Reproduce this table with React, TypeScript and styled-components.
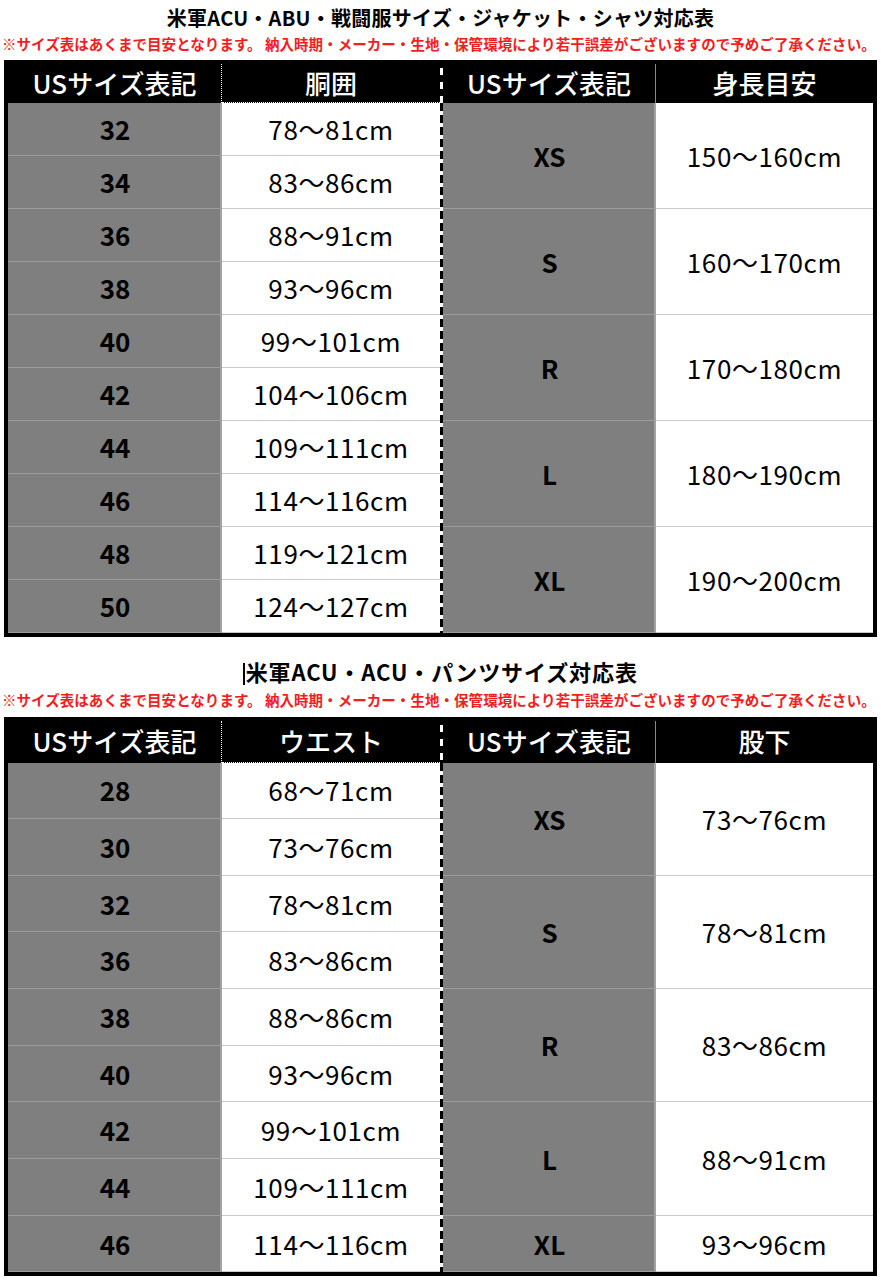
import styled, { createGlobalStyle } from 'styled-components';

const GlobalStyle = createGlobalStyle`
  html, body {
    margin: 0;
    padding: 0;
    background: #fff;
  }
  body {
    font-family: "Noto Sans CJK JP", "Noto Sans", sans-serif;
    color: #000;
  }
`;

const Page = styled.div`
  width: 881px;
  box-sizing: border-box;
  padding: 0 4px;
`;

const Title = styled.h2<{ $top: number; $size: number; $track: number }>`
  margin: ${(p) => p.$top}px 0 0;
  font-size: ${(p) => p.$size}px;
  letter-spacing: ${(p) => p.$track}px;
  line-height: 24px;
  font-weight: 700;
  text-align: center;
  white-space: nowrap;
`;

const Caret = styled.span`
  display: inline-block;
  width: 1.5px;
  height: 22px;
  margin-right: 1px;
  background: #000;
  vertical-align: -4px;
`;

const Note = styled.p<{ $top: number }>`
  margin: ${(p) => p.$top}px 0 8.5px -2px;
  font-size: 14.5px;
  line-height: 16px;
  font-weight: 700;
  color: #f41d1d;
  white-space: nowrap;
  letter-spacing: 0.05px;
`;

const Grid = styled.div<{ $head: number; $row: number; $rows: number }>`
  display: grid;
  grid-template-columns: 214px 218px 3px 213px 217px;
  grid-template-rows: ${(p) => p.$head}px repeat(${(p) => p.$rows}, ${(p) => p.$row}px);
  border: 4px solid #000;
  background: #000;
`;

const HeadCell = styled.div<{ $col: number; $edge?: 'dotted' | 'under' | 'line' }>`
  grid-column: ${(p) => p.$col};
  grid-row: 1;
  display: flex;
  align-items: center;
  justify-content: center;
  color: #fff;
  font-size: 26px;
  font-weight: 500;
  box-sizing: border-box;
  padding-bottom: 2px;
  border-right: ${(p) =>
    p.$edge === 'dotted' ? '1px dotted #fff' : p.$edge === 'line' ? '1px solid #8a8a8a' : 'none'};
  border-bottom: ${(p) => (p.$edge === 'under' ? '1px dotted #fff' : 'none')};
`;

const Divider = styled.div<{ $head?: boolean }>`
  grid-column: 3;
  grid-row: ${(p) => (p.$head ? '1' : '2 / -1')};
  background: ${(p) =>
    p.$head
      ? 'repeating-linear-gradient(to bottom, transparent 0 4px, #fff 4px 11px, transparent 11px 14px)'
      : 'repeating-linear-gradient(to bottom, #000 0 8px, #fff 8px 12px)'};
`;

const Cell = styled.div<{ $col: number; $row: number; $span?: number; $gray?: boolean; $bold?: boolean }>`
  grid-column: ${(p) => p.$col};
  grid-row: ${(p) => p.$row} / span ${(p) => p.$span ?? 1};
  display: flex;
  align-items: center;
  justify-content: center;
  box-sizing: border-box;
  background: ${(p) => (p.$gray ? '#7f7f7f' : '#fff')};
  border-bottom: 1px solid ${(p) => (p.$gray ? '#9c9c9c' : '#cacaca')};
  box-shadow: ${(p) => (p.$gray ? 'inset -2px 0 0 #a3a3a3' : 'none')};
  font-size: 26px;
  font-weight: ${(p) => (p.$bold ? 700 : 400)};
  letter-spacing: ${(p) => (p.$bold ? '0' : '0.6px')};
  padding-bottom: 1px;
`;

type Side = { size: string; value: string; span: number };

type TableData = {
  title: string;
  caret?: boolean;
  titleTop: number;
  titleSize: number;
  titleTrack: number;
  noteTop: number;
  head: number;
  row: number;
  headers: [string, string, string, string];
  left: [string, string][];
  right: Side[];
};

const NOTE =
  '※サイズ表はあくまで目安となります。 納入時期・メーカー・生地・保管環境により若干誤差がございますので予めご了承ください。';

const tables: TableData[] = [
  {
    title: '米軍ACU・ABU・戦闘服サイズ・ジャケット・シャツ対応表',
    titleTop: 6,
    titleSize: 20,
    titleTrack: 0.25,
    noteTop: 5.5,
    head: 39,
    row: 53,
    headers: ['USサイズ表記', '胴囲', 'USサイズ表記', '身長目安'],
    left: [
      ['32', '78〜81cm'],
      ['34', '83〜86cm'],
      ['36', '88〜91cm'],
      ['38', '93〜96cm'],
      ['40', '99〜101cm'],
      ['42', '104〜106cm'],
      ['44', '109〜111cm'],
      ['46', '114〜116cm'],
      ['48', '119〜121cm'],
      ['50', '124〜127cm'],
    ],
    right: [
      { size: 'XS', value: '150〜160cm', span: 2 },
      { size: 'S', value: '160〜170cm', span: 2 },
      { size: 'R', value: '170〜180cm', span: 2 },
      { size: 'L', value: '180〜190cm', span: 2 },
      { size: 'XL', value: '190〜200cm', span: 2 },
    ],
  },
  {
    title: '米軍ACU・ACU・パンツサイズ対応表',
    caret: true,
    titleTop: 22,
    titleSize: 22,
    titleTrack: 0.9,
    noteTop: 7,
    head: 42,
    row: 56.67,
    headers: ['USサイズ表記', 'ウエスト', 'USサイズ表記', '股下'],
    left: [
      ['28', '68〜71cm'],
      ['30', '73〜76cm'],
      ['32', '78〜81cm'],
      ['36', '83〜86cm'],
      ['38', '88〜86cm'],
      ['40', '93〜96cm'],
      ['42', '99〜101cm'],
      ['44', '109〜111cm'],
      ['46', '114〜116cm'],
    ],
    right: [
      { size: 'XS', value: '73〜76cm', span: 2 },
      { size: 'S', value: '78〜81cm', span: 2 },
      { size: 'R', value: '83〜86cm', span: 2 },
      { size: 'L', value: '88〜91cm', span: 2 },
      { size: 'XL', value: '93〜96cm', span: 1 },
    ],
  },
];

function SizeTable({ data }: { data: TableData }) {
  let rowStart = 2;
  const rightCells = data.right.map((r) => {
    const start = rowStart;
    rowStart += r.span;
    return (
      <>
        <Cell key={`${r.size}-s`} $col={4} $row={start} $span={r.span} $gray $bold>
          {r.size}
        </Cell>
        <Cell key={`${r.size}-v`} $col={5} $row={start} $span={r.span}>
          {r.value}
        </Cell>
      </>
    );
  });

  return (
    <section>
      <Title $top={data.titleTop} $size={data.titleSize} $track={data.titleTrack}>
        {data.caret && <Caret />}
        {data.title}
      </Title>
      <Note $top={data.noteTop}>{NOTE}</Note>
      <Grid $head={data.head} $row={data.row} $rows={data.left.length}>
        <HeadCell $col={1} $edge="dotted">{data.headers[0]}</HeadCell>
        <HeadCell $col={2} $edge="under">{data.headers[1]}</HeadCell>
        <Divider $head />
        <HeadCell $col={4} $edge="line">{data.headers[2]}</HeadCell>
        <HeadCell $col={5}>{data.headers[3]}</HeadCell>
        {data.left.map(([size, value], i) => (
          <>
            <Cell key={`${size}-s`} $col={1} $row={i + 2} $gray $bold>
              {size}
            </Cell>
            <Cell key={`${size}-v`} $col={2} $row={i + 2}>
              {value}
            </Cell>
          </>
        ))}
        <Divider />
        {rightCells}
      </Grid>
    </section>
  );
}

export default function App(): JSX.Element {
  return (
    <>
      <GlobalStyle />
      <Page>
        {tables.map((t) => (
          <SizeTable key={t.title} data={t} />
        ))}
      </Page>
    </>
  );
}
